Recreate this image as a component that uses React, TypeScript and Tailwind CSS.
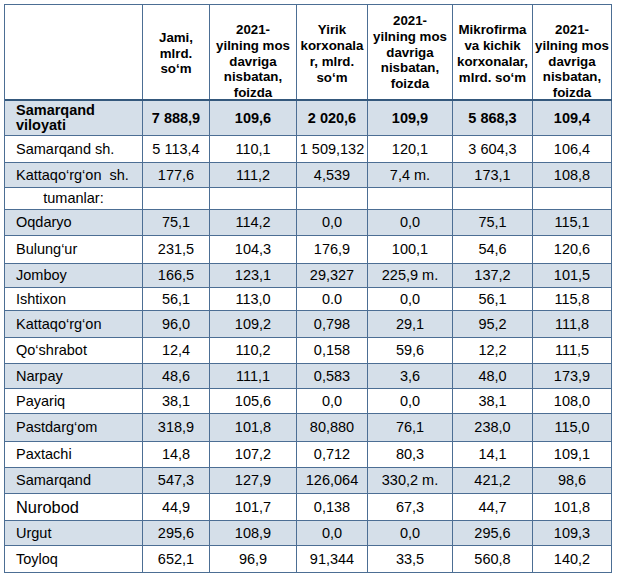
import React from 'react';

const W = ['w-[138px]', 'w-[67px]', 'w-[87px]', 'w-[71px]', 'w-[85px]', 'w-[80px]', 'w-[79px]'];

type Row = {
  name: React.ReactNode;
  vals: string[];
  h: string;
  bg: boolean;
  bold?: boolean;
  nameCls?: string;
  center?: boolean;
};

const rows: Row[] = [
  { name: <>Samarqand<br />viloyati</>, vals: ['7 888,9', '109,6', '2 020,6', '109,9', '5 868,3', '109,4'], h: 'h-[35px]', bg: true, bold: true },
  { name: 'Samarqand sh.', vals: ['5 113,4', '110,1', '1 509,132', '120,1', '3 604,3', '106,4'], h: 'h-[27px]', bg: false },
  { name: 'Kattaqo‘rg‘on  sh.', vals: ['177,6', '111,2', '4,539', '7,4 m.', '173,1', '108,8'], h: 'h-[25px]', bg: true },
  { name: 'tumanlar:', vals: ['', '', '', '', '', ''], h: 'h-[22px]', bg: false, center: true },
  { name: 'Oqdaryo', vals: ['75,1', '114,2', '0,0', '0,0', '75,1', '115,1'], h: 'h-[26px]', bg: true },
  { name: 'Bulung‘ur', vals: ['231,5', '104,3', '176,9', '100,1', '54,6', '120,6'], h: 'h-[28px]', bg: false },
  { name: 'Jomboy', vals: ['166,5', '123,1', '29,327', '225,9 m.', '137,2', '101,5'], h: 'h-[24px]', bg: true },
  { name: 'Ishtixon', vals: ['56,1', '113,0', '0.0', '0,0', '56,1', '115,8'], h: 'h-[23px]', bg: false },
  { name: 'Kattaqo‘rg‘on', vals: ['96,0', '109,2', '0,798', '29,1', '95,2', '111,8'], h: 'h-[27px]', bg: true },
  { name: 'Qo‘shrabot', vals: ['12,4', '110,2', '0,158', '59,6', '12,2', '111,5'], h: 'h-[26px]', bg: false },
  { name: 'Narpay', vals: ['48,6', '111,1', '0,583', '3,6', '48,0', '173,9'], h: 'h-[25px]', bg: true },
  { name: 'Payariq', vals: ['38,1', '105,6', '0,0', '0,0', '38,1', '108,0'], h: 'h-[25px]', bg: false },
  { name: 'Pastdarg‘om', vals: ['318,9', '101,8', '80,880', '76,1', '238,0', '115,0'], h: 'h-[28px]', bg: true },
  { name: 'Paxtachi', vals: ['14,8', '107,2', '0,712', '80,3', '14,1', '109,1'], h: 'h-[26px]', bg: false },
  { name: 'Samarqand', vals: ['547,3', '127,9', '126,064', '330,2 m.', '421,2', '98,6'], h: 'h-[26px]', bg: true },
  { name: 'Nurobod', vals: ['44,9', '101,7', '0,138', '67,3', '44,7', '101,8'], h: 'h-[27px]', bg: false, nameCls: 'text-[16.4px]' },
  { name: 'Urgut', vals: ['295,6', '108,9', '0,0', '0,0', '295,6', '109,3'], h: 'h-[25px]', bg: true },
  { name: 'Toyloq', vals: ['652,1', '96,9', '91,344', '33,5', '560,8', '140,2'], h: 'h-[27px]', bg: false },
];

const pct = <>2021-<br />yilning mos<br />davriga<br />nisbatan,<br />foizda</>;

const headers: { text: React.ReactNode; cls: string }[] = [
  { text: '', cls: 'items-center' },
  { text: <>Jami,<br />mlrd.<br />so‘m</>, cls: 'items-center pt-[3px]' },
  { text: pct, cls: 'items-start pt-[17px]' },
  { text: <>Yirik<br />korxonala<br />r, mlrd.<br />so‘m</>, cls: 'items-center pt-[4px]' },
  { text: pct, cls: 'items-start pt-[8px]' },
  { text: <>Mikrofirma<br />va kichik<br />korxonalar,<br />mlrd. so‘m</>, cls: 'items-center pt-[4px]' },
  { text: pct, cls: 'items-start pt-[17px]' },
];

export default function App() {
  return (
    <div className="w-[618px] h-[577px] bg-white overflow-hidden" style={{ fontFamily: '"Liberation Sans", Arial, sans-serif' }}>
      <div className="ml-[4px] mt-[4px] w-[608px] border-l border-t border-[#4c6e94] text-black">
        {/* header */}
        <div className="flex h-[96px] border-b-2 border-[#34587c]">
          {headers.map((hd, i) => (
            <div
              key={i}
              className={`${W[i]} shrink-0 border-r border-[#4c6e94] flex justify-center ${hd.cls} text-center font-bold text-[13.3px] leading-[15.8px] whitespace-nowrap`}
            >
              <div>{hd.text}</div>
            </div>
          ))}
        </div>
        {rows.map((r, ri) => (
          <div key={ri} className={`flex ${r.h} border-b border-[#4c6e94] ${r.bg ? 'bg-[#d5dfe9]' : 'bg-white'} ${r.bold ? 'font-bold' : ''} text-[14.5px]`}>
            <div
              className={`${W[0]} shrink-0 border-r border-[#4c6e94] flex items-center ${r.center ? 'justify-center' : 'pl-[11px]'} whitespace-pre ${r.bold ? 'leading-[15px]' : 'leading-none'} ${r.nameCls ?? ''}`}
            >
              <div>{r.name}</div>
            </div>
            {r.vals.map((v, vi) => (
              <div
                key={vi}
                className={`${W[vi + 1]} shrink-0 border-r border-[#4c6e94] flex items-center justify-center whitespace-nowrap leading-none`}
              >
                {v}
              </div>
            ))}
          </div>
        ))}
      </div>
    </div>
  );
}
